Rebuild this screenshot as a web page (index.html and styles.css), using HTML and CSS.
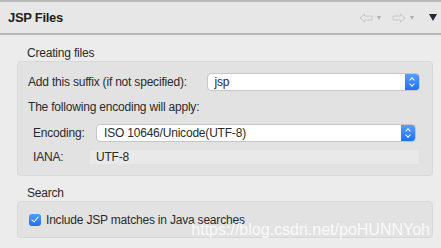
FILE: index.html
```html
<!DOCTYPE html>
<html lang="en">
<head>
    <meta charset="UTF-8">
    <title>JSP Files</title>
    <link rel="stylesheet" href="styles.css">
</head>
<body>

<div class="header">
    <div class="title">JSP Files</div>
    <div class="nav">
        <svg width="14" height="10" viewBox="0 0 14 10"><path d="M1 5 L5.5 1 V3 H13 V7 H5.5 V9 Z" fill="none" stroke="#c8c8c8" stroke-width="1"/></svg>
        <span class="caret light"></span>
        <svg width="14" height="10" viewBox="0 0 14 10"><path d="M13 5 L8.5 1 V3 H1 V7 H8.5 V9 Z" fill="none" stroke="#c8c8c8" stroke-width="1"/></svg>
        <span class="caret light"></span>
        <span class="caret dark"></span>
    </div>
</div>

<div class="content">
    <!-- Creating files -->
    <div class="group-title">Creating files</div>
    <div class="group">
        <div class="row">
            <span class="label">Add this suffix (if not specified):</span>
            <div class="combo suffix"><span>jsp</span><span class="arrows"></span></div>
        </div>
        <div class="row text-row">The following encoding will apply:</div>
        <div class="row indent">
            <span class="label short">Encoding:</span>
            <div class="combo encoding"><span>ISO 10646/Unicode(UTF-8)</span><span class="arrows"></span></div>
        </div>
        <div class="row indent iana">
            <span class="label short">IANA:</span>
            <div class="readonly">UTF-8</div>
        </div>
    </div>

    <!-- Search -->
    <div class="group-title">Search</div>
    <div class="group search">
        <label class="check-row">
            <span class="checkbox"></span>
            Include JSP matches in Java searches
        </label>
        <span class="watermark">https://blog.csdn.net/poHUNNYoh</span>
    </div>
</div>

</body>
</html>
```

FILE: styles.css
```css
* {
    margin: 0;
    padding: 0;
    box-sizing: border-box;
}
body {
    font-family: "Liberation Sans", Arial, sans-serif;
    font-size: 12px;
    letter-spacing: -0.2px;
    color: #2a2a2a;
    background: #ececec;
    width: 441px;
    height: 248px;
    overflow: hidden;
}
/* Header */
.header {
    height: 35px;
    border-top: 2px solid #b9b9b9;
    border-bottom: 2px solid #b9b9b9;
    background: #e7e7e7;
    display: flex;
    align-items: center;
    justify-content: space-between;
    padding: 0 4px 0 8px;
}
.title {
    font-weight: bold;
    font-size: 13px;
    letter-spacing: -0.3px;
    color: #1e1e1e;
}
.nav {
    display: flex;
    align-items: center;
    gap: 4px;
}
.caret {
    width: 0;
    height: 0;
    border-left: 2.5px solid transparent;
    border-right: 2.5px solid transparent;
    border-top: 4px solid #b0b0b0;
    margin-right: 7px;
}
.caret.dark {
    border-left-width: 4.5px;
    border-right-width: 4.5px;
    border-top: 7px solid #2e2438;
    margin-left: 4px;
    margin-right: 0;
}
/* Content */
.content {
    padding: 10px 8px 0 17px;
}
.group-title {
    padding-left: 10px;
    height: 16px;
    line-height: 16px;
}
.group {
    background: #e2e2e2;
    border: 1px solid #d8d8d8;
    border-radius: 4px;
    padding: 11px 12px 11px 10px;
    margin-bottom: 9px;
}
.row {
    display: flex;
    align-items: center;
    height: 18px;
    white-space: nowrap;
}
.text-row {
    margin: 8px 0 0;
    height: 16px;
}
.indent {
    padding-left: 5px;
    margin-top: 9px;
}
.label {
    width: 179px;
}
.label.short {
    width: 63px;
}
.combo {
    height: 18px;
    background: #fff;
    border: 1px solid #c6c6c6;
    border-radius: 4px;
    display: flex;
    align-items: center;
    justify-content: space-between;
    padding-left: 7px;
    overflow: hidden;
}
.suffix {
    width: 214px;
}
.encoding {
    width: 320px;
}
.arrows {
    width: 15px;
    height: 18px;
    margin: -1px -1px -1px 0;
    background: linear-gradient(#5aa2fa, #1c6ef2);
    border-radius: 0 4px 4px 0;
    position: relative;
}
.arrows::before,
.arrows::after {
    content: "";
    position: absolute;
    left: 5px;
    width: 3px;
    height: 3px;
    border-left: 1.3px solid #fff;
    border-top: 1.3px solid #fff;
}
.arrows::before {
    top: 5px;
    transform: rotate(45deg);
}
.arrows::after {
    top: 9px;
    transform: rotate(-135deg);
}
.iana {
    margin-top: 8px;
    height: 14px;
}
.readonly {
    flex: 1;
    height: 14px;
    line-height: 14px;
    background: #e9e9e9;
    margin-left: -6px;
    padding-left: 6px;
    margin-right: 1px;
}
/* Search group */
.search {
    height: 37px;
    padding: 0 10px 0 11px;
    position: relative;
    display: flex;
    align-items: center;
}
.check-row {
    display: flex;
    align-items: center;
    gap: 5px;
}
.checkbox {
    width: 12px;
    height: 12px;
    border-radius: 3px;
    background: linear-gradient(#4f9cfa, #1f70ee);
    position: relative;
}
.checkbox::after {
    content: "";
    position: absolute;
    left: 4px;
    top: 1.5px;
    width: 3px;
    height: 6px;
    border-right: 1.6px solid #fff;
    border-bottom: 1.6px solid #fff;
    transform: rotate(40deg);
}
.watermark {
    position: absolute;
    right: 2px;
    bottom: -1px;
    font-size: 16px;
    line-height: 16px;
    letter-spacing: 0;
    color: rgba(255, 255, 255, 0.85);
}
```
